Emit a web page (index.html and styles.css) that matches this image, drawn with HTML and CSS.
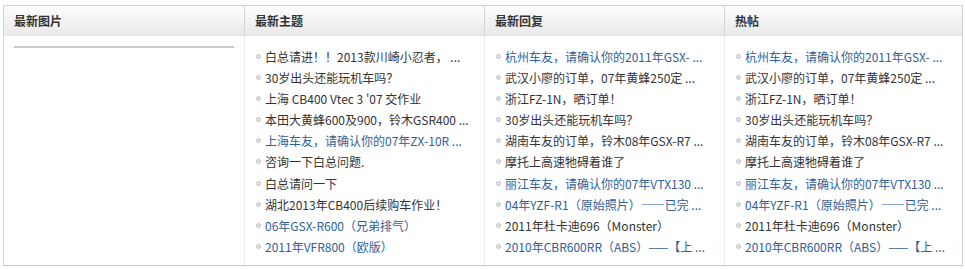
FILE: index.html
```html
<!DOCTYPE html>
<html lang="zh-CN">
<head>
    <meta charset="UTF-8">
    <title>论坛动态</title>
    <link rel="stylesheet" href="styles.css">
</head>
<body>

<div class="board">
    <!-- column titles -->
    <div class="board-head">
        <div class="head-cell">最新图片</div>
        <div class="head-cell">最新主题</div>
        <div class="head-cell">最新回复</div>
        <div class="head-cell">热帖</div>
    </div>

    <div class="board-body">
        <div class="col">
            <div class="pic-line"></div>
        </div>

        <div class="col">
            <ul class="topics">
                <li>白总请进！！2013款川崎小忍者， ...</li>
                <li>30岁出头还能玩机车吗？</li>
                <li>上海 CB400 Vtec 3 '07 交作业</li>
                <li>本田大黄蜂600及900，铃木GSR400 ...</li>
                <li><a href="#">上海车友，请确认你的07年ZX-10R ...</a></li>
                <li>咨询一下白总问题.</li>
                <li>白总请问一下</li>
                <li>湖北2013年CB400后续购车作业！</li>
                <li><a href="#">06年GSX-R600（兄弟排气）</a></li>
                <li><a href="#">2011年VFR800（欧版）</a></li>
            </ul>
        </div>

        <div class="col">
            <ul class="topics">
                <li><a href="#">杭州车友，请确认你的2011年GSX- ...</a></li>
                <li>武汉小廖的订单，07年黄蜂250定 ...</li>
                <li>浙江FZ-1N，晒订单！</li>
                <li>30岁出头还能玩机车吗？</li>
                <li>湖南车友的订单，铃木08年GSX-R7 ...</li>
                <li>摩托上高速牠碍着谁了</li>
                <li><a href="#">丽江车友，请确认你的07年VTX130 ...</a></li>
                <li><a href="#">04年YZF-R1（原始照片）——已完 ...</a></li>
                <li>2011年杜卡迪696（Monster）</li>
                <li><a href="#">2010年CBR600RR（ABS）——【上 ...</a></li>
            </ul>
        </div>

        <div class="col">
            <ul class="topics">
                <li><a href="#">杭州车友，请确认你的2011年GSX- ...</a></li>
                <li>武汉小廖的订单，07年黄蜂250定 ...</li>
                <li>浙江FZ-1N，晒订单！</li>
                <li>30岁出头还能玩机车吗？</li>
                <li>湖南车友的订单，铃木08年GSX-R7 ...</li>
                <li>摩托上高速牠碍着谁了</li>
                <li><a href="#">丽江车友，请确认你的07年VTX130 ...</a></li>
                <li><a href="#">04年YZF-R1（原始照片）——已完 ...</a></li>
                <li>2011年杜卡迪696（Monster）</li>
                <li><a href="#">2010年CBR600RR（ABS）——【上 ...</a></li>
            </ul>
        </div>
    </div>
</div>

</body>
</html>
```

FILE: styles.css
```css
body {
    margin: 0;
    padding: 5px 3px 0 3px;
    font-family: "Noto Sans CJK SC", "Liberation Sans", sans-serif;
    font-size: 12px;
    color: #333;
    background: #fff;
}
.board {
    width: 958px;
    border: 1px solid #d2d2d2;
    border-bottom-color: #c4c4c4;
}
.board-head {
    display: grid;
    grid-template-columns: 240px 240px 240px 1fr;
    height: 30px;
    background: linear-gradient(#fdfdfd, #e9e9e9);
}
.head-cell {
    padding-left: 10px;
    line-height: 30px;
    font-weight: bold;
    font-size: 12px;
    color: #333;
    border-left: 1px solid #d4d4d4;
}
.head-cell:first-child {
    border-left: none;
}
.board-body {
    display: grid;
    grid-template-columns: 240px 240px 240px 1fr;
}
.col {
    border-left: 1px solid #ececec;
    padding: 10px 10px 8px 10px;
    min-width: 0;
}
.col:first-child {
    border-left: none;
}
.pic-line {
    height: 2px;
    background: #cacaca;
    margin: 0 0 0 0;
}
.topics {
    list-style: none;
    margin: 0;
    padding: 0;
}
.topics li {
    line-height: 21.1px;
    height: 21.1px;
    white-space: nowrap;
    overflow: hidden;
    padding-left: 10px;
    position: relative;
}
.topics li::before {
    content: "";
    position: absolute;
    left: 1px;
    top: 8px;
    width: 3px;
    height: 3px;
    border: 1px solid #c2c2c2;
    background: #e4e4e4;
    border-radius: 50%;
}
.topics a {
    color: #2f5f96;
    text-decoration: none;
}
```
